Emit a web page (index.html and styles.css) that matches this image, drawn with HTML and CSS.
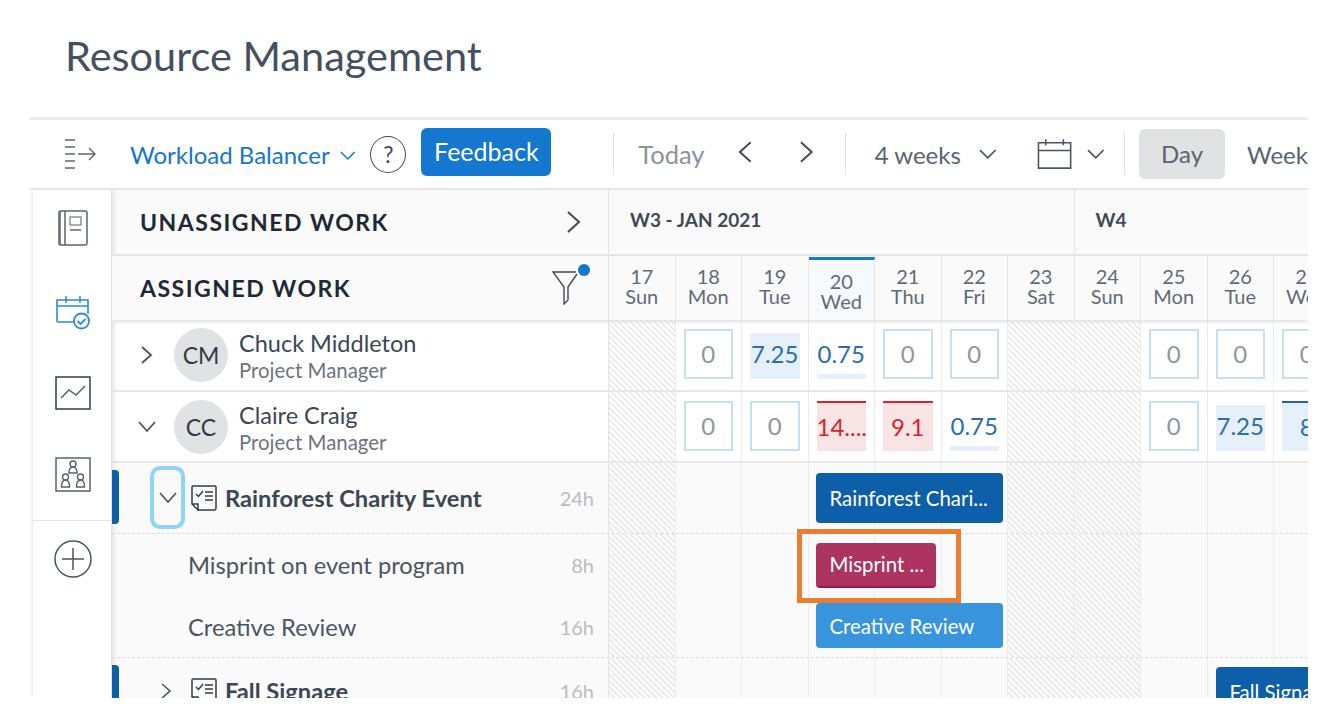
FILE: index.html
```html
<!DOCTYPE html>
<html>
 <head>
  <meta charset="UTF-8">
  <title>Resource Management</title>
  <link rel="stylesheet" href="styles.css">
 </head>
 <body>
  <div class="page">
   <h1 class="title">Resource Management</h1>

   <div class="toolbar">
    <svg class="ico-expand" width="34" height="34" viewBox="0 0 34 34"><path d="M2 3h10M2 10h10M2 17h10M2 24h10M2 31h10" stroke="#5b6572" stroke-width="1.5" fill="none"/><path d="M15 17h17M26 11l6 6-6 6" stroke="#5b6572" stroke-width="1.4" fill="none"/></svg>
    <a class="balancer">Workload Balancer</a>
    <svg class="chev-blue" width="16" height="10" viewBox="0 0 16 10"><path d="M1 1l7 7 7-7" stroke="#1477d0" stroke-width="1.5" fill="none"/></svg>
    <div class="help">?</div>
    <div class="feedback">Feedback</div>
    <div class="sep sep-a"></div>
    <span class="today">Today</span>
    <svg class="nav-prev" width="16" height="24" viewBox="0 0 16 24"><path d="M14 2L3 12l11 10" stroke="#3f4a57" stroke-width="2" fill="none"/></svg>
    <svg class="nav-next" width="16" height="24" viewBox="0 0 16 24"><path d="M2 2l11 10L2 22" stroke="#3f4a57" stroke-width="2" fill="none"/></svg>
    <div class="sep sep-b"></div>
    <span class="range">4 weeks</span>
    <svg class="chev-range" width="18" height="11" viewBox="0 0 18 11"><path d="M1 1l8 8 8-8" stroke="#4a5561" stroke-width="1.7" fill="none"/></svg>
    <svg class="ico-cal" width="36" height="32" viewBox="0 0 36 32"><path d="M1.5 4.500h33v26h-33zM1.500 12.500h33" stroke="#4a5561" stroke-width="1.600" fill="none"/><path d="M9 1v6M27 1v6" stroke="#4a5561" stroke-width="1.500"/></svg>
    <svg class="chev-cal" width="18" height="11" viewBox="0 0 18 11"><path d="M1 1l8 8 8-8" stroke="#4a5561" stroke-width="1.700" fill="none"/></svg>
    <div class="sep sep-c"></div>
    <div class="day-btn">Day</div>
    <span class="week-btn">Week</span>
   </div>

   <div class="main">
    <div class="rail">
     <div class="rail-top">
      <svg class="r-book" width="30" height="36" viewBox="0 0 30 36"><rect x="1" y="1" width="28" height="34" rx="2" fill="none" stroke="#59636f" stroke-width="1.500"/><path d="M7 1v34M2 1v34" stroke="#59636f" stroke-width="1.500"/><rect x="12" y="7" width="11" height="8" fill="none" stroke="#8a929b" stroke-width="1.500"/><path d="M12 20h11" stroke="#59636f" stroke-width="1.500"/></svg>
      <svg class="r-cal" width="34" height="34" viewBox="0 0 34 34"><path d="M19 26H2a1 1 0 0 1-1-1V4h31v14M1 10h31" fill="none" stroke="#2a8ae0" stroke-width="1.600"/><path d="M10 0v7M24 0v7" stroke="#2a8ae0" stroke-width="1.500"/><circle cx="25.500" cy="25" r="7.500" fill="#fff" stroke="#2a8ae0" stroke-width="1.800"/><path d="M21.500 25l3 3 5-5" fill="none" stroke="#2a8ae0" stroke-width="1.800"/></svg>
      <svg class="r-chart" width="36" height="34" viewBox="0 0 36 34"><rect x="1" y="1" width="34" height="32" fill="none" stroke="#333c47" stroke-width="1.500"/><path d="M6 22l8-8 7 5 9-9" fill="none" stroke="#59636f" stroke-width="1.500"/></svg>
      <svg class="r-org" width="36" height="35" viewBox="0 0 36 35"><rect x="1" y="1" width="34" height="33" fill="none" stroke="#59636f" stroke-width="1.500"/><g fill="none" stroke="#59636f" stroke-width="1.400"><circle cx="18" cy="7" r="3"/><path d="M14 16c0-4 2-6 4-6s4 2 4 6z"/><circle cx="10.500" cy="20" r="3"/><path d="M6.500 30c0-5 2-7 4-7s4 2 4 7z"/><circle cx="25.500" cy="20" r="3"/><path d="M21.500 30c0-5 2-7 4-7s4 2 4 7z"/></g></svg>
     </div>
     <div class="rail-bottom">
      <svg width="38" height="38" viewBox="0 0 38 38"><circle cx="19" cy="19" r="18" fill="none" stroke="#4a5561" stroke-width="1.500"/><path d="M19 8v22M8 19h22" stroke="#4a5561" stroke-width="1.500"/></svg>
     </div>
    </div>

    <div class="board">
     <div class="row row-week">
      <div class="lead lead-head">
       <span class="head-text">UNASSIGNED WORK</span>
       <svg width="16" height="24" viewBox="0 0 16 24"><path d="M2 2l11 10L2 22" stroke="#3f4a57" stroke-width="2" fill="none"/></svg>
      </div>
      <div class="days">
       <div class="week w3">W3 - JAN 2021</div>
       <div class="week w4">W4</div>
      </div>
     </div>

     <div class="row row-dates">
      <div class="lead lead-head">
       <span class="head-text">ASSIGNED WORK</span>
       <span class="filter">
        <svg width="30" height="40" viewBox="0 0 30 40"><path d="M24 7H1l11 15v17l4-4V22L25 9" fill="none" stroke="#3f4a57" stroke-width="1.400"/></svg>
        <i class="filter-dot"></i>
       </span>
      </div>
      <div class="days">
       <div class="date">17<br>Sun</div>
       <div class="date">18<br>Mon</div>
       <div class="date">19<br>Tue</div>
       <div class="date now">20<br>Wed</div>
       <div class="date">21<br>Thu</div>
       <div class="date">22<br>Fri</div>
       <div class="date">23<br>Sat</div>
       <div class="date">24<br>Sun</div>
       <div class="date">25<br>Mon</div>
       <div class="date">26<br>Tue</div>
       <div class="date">27<br>Wed</div>
      </div>
     </div>

     <div class="row row-person row-first">
      <div class="lead">
       <svg class="tw-person" width="14" height="20" viewBox="0 0 14 20"><path d="M2 2l9 8-9 8" stroke="#4a5561" stroke-width="1.800" fill="none"/></svg>
       <div class="avatar">CM</div>
       <div class="who"><div class="name">Chuck Middleton</div><div class="role">Project Manager</div></div>
      </div>
      <div class="days">
       <div class="cell off"></div>
       <div class="cell"><div class="load empty">0</div></div>
       <div class="cell"><div class="load some">7.25</div></div>
       <div class="cell"><div class="load low">0.75</div></div>
       <div class="cell"><div class="load empty">0</div></div>
       <div class="cell"><div class="load empty">0</div></div>
       <div class="cell off"></div>
       <div class="cell off"></div>
       <div class="cell"><div class="load empty">0</div></div>
       <div class="cell"><div class="load empty">0</div></div>
       <div class="cell"><div class="load empty">0</div></div>
      </div>
     </div>

     <div class="row row-person">
      <div class="lead">
       <svg class="tw-open" width="20" height="14" viewBox="0 0 20 14"><path d="M2 2l8 9 8-9" stroke="#4a5561" stroke-width="1.800" fill="none"/></svg>
       <div class="avatar">CC</div>
       <div class="who who-second"><div class="name">Claire Craig</div><div class="role">Project Manager</div></div>
      </div>
      <div class="days">
       <div class="cell off"></div>
       <div class="cell"><div class="load empty">0</div></div>
       <div class="cell"><div class="load empty">0</div></div>
       <div class="cell"><div class="load over">14....</div></div>
       <div class="cell"><div class="load over">9.1</div></div>
       <div class="cell"><div class="load low">0.75</div></div>
       <div class="cell off"></div>
       <div class="cell off"></div>
       <div class="cell"><div class="load empty">0</div></div>
       <div class="cell"><div class="load some">7.25</div></div>
       <div class="cell"><div class="load some full">8</div></div>
      </div>
     </div>

     <div class="row row-project">
      <div class="lead lead-work">
       <i class="tab"></i>
       <div class="focus-ring"><svg width="18" height="12" viewBox="0 0 18 12"><path d="M1 1l8 9 8-9" stroke="#4a5561" stroke-width="1.600" fill="none"/></svg></div>
       <svg class="ico-task" width="26" height="26" viewBox="0 0 26 26"><path d="M7 25H23a2 2 0 0 0 2-2V2a1 1 0 0 0-1-1H2a1 1 0 0 0-1 1v17l6 6v-6H1" fill="none" stroke="#333c47" stroke-width="1.500"/><path d="M5 9l2.500 2.500L12 6" fill="none" stroke="#333c47" stroke-width="1.500"/><path d="M14 7h8M14 11h8M14 15h8" stroke="#333c47" stroke-width="1.500"/></svg>
       <span class="project-name">Rainforest Charity Event</span>
       <span class="hours">24h</span>
      </div>
      <div class="days">
       <div class="cell off"></div><div class="cell"></div><div class="cell"></div><div class="cell"></div><div class="cell"></div><div class="cell"></div><div class="cell off"></div><div class="cell off"></div><div class="cell"></div><div class="cell"></div><div class="cell"></div>
       <div class="bar bar-dark bar-wide">Rainforest Chari...</div>
      </div>
     </div>

     <div class="row row-task">
      <div class="lead lead-work lead-task">
       <span class="task-name">Misprint on event program</span>
       <span class="hours">8h</span>
      </div>
      <div class="days">
       <div class="cell off"></div><div class="cell"></div><div class="cell"></div><div class="cell"></div><div class="cell"></div><div class="cell"></div><div class="cell off"></div><div class="cell off"></div><div class="cell"></div><div class="cell"></div><div class="cell"></div>
       <div class="bar bar-red">Misprint ...</div>
       <div class="callout"></div>
      </div>
     </div>

     <div class="row row-task2">
      <div class="lead lead-work lead-task">
       <span class="task-name">Creative Review</span>
       <span class="hours">16h</span>
      </div>
      <div class="days">
       <div class="cell off"></div><div class="cell"></div><div class="cell"></div><div class="cell"></div><div class="cell"></div><div class="cell"></div><div class="cell off"></div><div class="cell off"></div><div class="cell"></div><div class="cell"></div><div class="cell"></div>
       <div class="bar bar-light bar-wide">Creative Review</div>
      </div>
     </div>

     <div class="row row-last">
      <div class="lead lead-work">
       <i class="tab"></i>
       <svg class="tw-fall" width="14" height="18" viewBox="0 0 14 18"><path d="M2 2l8 7-8 7" stroke="#4a5561" stroke-width="1.600" fill="none"/></svg>
       <svg class="ico-task" width="26" height="26" viewBox="0 0 26 26"><path d="M7 25H23a2 2 0 0 0 2-2V2a1 1 0 0 0-1-1H2a1 1 0 0 0-1 1v17l6 6v-6H1" fill="none" stroke="#333c47" stroke-width="1.500"/><path d="M5 9l2.500 2.500L12 6" fill="none" stroke="#333c47" stroke-width="1.500"/><path d="M14 7h8M14 11h8M14 15h8" stroke="#333c47" stroke-width="1.500"/></svg>
       <span class="project-name">Fall Signage</span>
       <span class="hours">16h</span>
      </div>
      <div class="days">
       <div class="cell off"></div><div class="cell"></div><div class="cell"></div><div class="cell"></div><div class="cell"></div><div class="cell"></div><div class="cell off"></div><div class="cell off"></div><div class="cell"></div><div class="cell"></div><div class="cell"></div>
       <div class="bar bar-dark bar-fall">Fall Signage</div>
      </div>
     </div>
    </div>
   </div>
  </div>
 </body>
</html>
```

FILE: styles.css
```css
*{ margin:0; padding:0; box-sizing:border-box;}

body{
 background:#fff;
 font-family:Lato,"Open Sans",sans-serif;
 color:#3f4a57;
}

.page{
 width:1278px;
 height:698px;
 margin-left:30px;
 overflow:hidden;
}

.title{
 height:117px;
 padding:27px 0 0 35px;
 font-size:41.500px;
 line-height:56px;
 font-weight:400;
 color:#44505f;
 white-space:nowrap;
}

/* toolbar */
.toolbar{
 height:73px;
 border-top:3px solid #ececec;
 border-bottom:2px solid #e6e6e6;
 display:flex;
 align-items:center;
 white-space:nowrap;
}
.ico-expand{ margin-left:33px; flex:none;}
.balancer{
 margin-left:33px;
 font-size:24px;
 color:#1477d0;
}
.chev-blue{ margin-left:10px; margin-top:3px;}
.help{
 width:37px;
 height:37px;
 margin-left:15px;
 border:1.500px solid #3f4a57;
 border-radius:50%;
 font-size:23px;
 line-height:34px;
 text-align:center;
}
.feedback{
 width:133px;
 height:48px;
 margin-left:15px;
 margin-top:-4px;
 background:#1477d0;
 border-radius:6px;
 color:#fff;
 font-size:25px;
 line-height:46px;
 text-align:center;
}
.sep{ width:1px; height:42px; flex:none; background:#e2e2e2;}
.sep-a{ margin-left:62px;}
.today{ margin-left:24px; font-size:25.500px; color:#8b939b;}
.nav-prev{ margin-left:33px; margin-top:-4px;}
.nav-next{ margin-left:46px; margin-top:-4px;}
.sep-b{ margin-left:30px;}
.range{ margin-left:29px; font-size:24px; color:#5a6470;}
.chev-range{ margin-left:18px;}
.ico-cal{ margin-left:41px;}
.chev-cal{ margin-left:14px;}
.sep-c{ margin-left:20px;}
.day-btn{
 width:88px;
 height:50px;
 margin-left:14px;
 background:#e0e2e4;
 border-radius:6px;
 font-size:24px;
 line-height:50px;
 text-align:center;
 color:#5a6470;
}
.week-btn{ margin-left:22px; font-size:24px; color:#5a6470;}

/* layout under toolbar */
.main{ display:flex; height:508px;}

.rail{
 width:79px;
 flex:none;
 background:#fff;
 margin-left:3px;
 border-right:1px solid #e2e2e2;
 box-shadow:-3px 0 4px -2px #e6e6e6,2px 0 4px #e4e4e4;
 position:relative;
}
.rail-top{
 height:331px;
 padding-left:2px;
 border-bottom:1px solid #e2e2e2;
 display:flex;
 flex-direction:column;
 align-items:center;
}
.r-book{ margin-top:20px;}
.r-cal{ margin-top:50px;}
.r-chart{ margin-top:46px;}
.r-org{ margin-top:47px;}
.rail-bottom{ padding:19px 0 0 1px; text-align:center;}

.board{ flex:1; min-width:0; overflow:hidden;}

.row{ display:flex;}
.row-week{ height:66px; background:#fafafa; border-bottom:2px solid #e6e6e6;}
.row-dates{ height:64px; background:#fafafa; box-shadow:0 2px 4px #e0e0e0; position:relative; z-index:1;}
.row-person{ height:71px; border-bottom:2px solid #e8e8e8;}
.row-first{ height:72px;}
.row-project{ height:71px; background:#fafafa; border-bottom:1px dashed #ddd;}
.row-task{ height:62px; background:#fafafa;}
.row-task2{ height:62px; background:#fafafa; border-bottom:1px dashed #ddd;}
.row-last{ height:70px; background:#fafafa;}
.row-last .lead{ padding-bottom:4px;}

.lead{
 width:497px;
 flex:none;
 display:flex;
 align-items:center;
 position:relative;
 border-right:1px solid #e4e4e4;
}

.lead-head{ padding:0 26px 0 28px; justify-content:space-between;}
.head-text{
 font-size:23px;
 font-weight:700;
 letter-spacing:1.500px;
 color:#1f2933;
}
.filter{ position:relative; display:block; height:40px; margin-top:-7px;}
.filter-dot{
 position:absolute;
 top:-1px;
 left:26px;
 width:12px;
 height:12px;
 border-radius:50%;
 background:#1477d0;
}

.days{
 flex:none;
 display:grid;
 grid-template-columns:repeat(11,66.5px);
 grid-template-rows:100%;
 width:732px;
 position:relative;
}

.week{
 grid-row:1;
 grid-column:span 7;
 padding:18px 0 0 21px;
 font-size:19px;
 line-height:24px;
 font-weight:700;
 color:#3f4a57;
 border-right:1px solid #e6e6e6;
}
.w4{ border-right:0;}

.date{
 border-right:1px solid #e6e6e6;
 padding-top:10px;
 font-size:20px;
 line-height:20px;
 text-align:center;
 color:#5f6b78;
}
.date.now{
 padding-top:11px;
 background:#f6fafd;
 border-top:3px solid #1477d0;
 margin-top:1px;
}

.cell{
 grid-row:1;
 border-right:1px solid #ececec;
 padding:8px;
 display:flex;
}
/* bars are placed first by the grid, so the day cells need fixed columns */
.cell:nth-child(1){ grid-column:1;}
.cell:nth-child(2){ grid-column:2;}
.cell:nth-child(3){ grid-column:3;}
.cell:nth-child(4){ grid-column:4;}
.cell:nth-child(5){ grid-column:5;}
.cell:nth-child(6){ grid-column:6;}
.cell:nth-child(7){ grid-column:7;}
.cell:nth-child(8){ grid-column:8;}
.cell:nth-child(9){ grid-column:9;}
.cell:nth-child(10){ grid-column:10;}
.cell:nth-child(11){ grid-column:11;}
.row-person .cell{ padding:9px 8px 10px;}
.row-first .cell{ padding-bottom:11px;}
.off{
 background:repeating-linear-gradient(45deg,transparent 0,transparent 3.343px,#e8e8e8 3.343px,#e8e8e8 4.243px);
}

.load{
 flex:1;
 min-width:0;
 font-size:24px;
 line-height:50px;
 text-align:center;
 color:#2b6ea8;
 white-space:nowrap;
}
.empty{ border:2px solid #c6e0f5; color:#8f969d; line-height:46px; background:#fff;}
.some{ background:#e6f0fa; margin-top:4px; line-height:42px;}
.some.full{ margin-top:0; border-top:2px solid #1f63b3; line-height:48px; margin-right:-30px; padding-right:30px;}
.low{ border-bottom:5px solid #e6f0fa; line-height:49px;}
.over{
 background:#f8e4e4;
 border-top:2px solid #e0202c;
 color:#dc1f2b;
 line-height:48px;
}

.avatar{
 width:54px;
 height:54px;
 flex:none;
 margin-left:20px;
 border-radius:50%;
 background:#e1e2e4;
 font-size:23px;
 line-height:54px;
 text-align:center;
 color:#2f3a46;
}
.tw-person{ margin-left:28px;}
.tw-open{ margin-left:25px; margin-right:-3px;}
.who{ margin-left:11px;}
.who-second{ padding-top:2px;}
.name{ font-size:23.500px; line-height:30px; color:#3b4754;}
.role{ font-size:20.400px; line-height:25px; color:#6b7580;}

.lead-work{ padding-right:14px;}
.tab{
 position:absolute;
 left:0;
 top:7px;
 width:7px;
 height:54px;
 background:#0d5fa9;
 border-radius:0 4px 4px 0;
}
.focus-ring{
 width:35px;
 height:63px;
 margin-left:38px;
 margin-top:-1px;
 border:4px solid #8fd4f9;
 border-radius:10px;
 display:flex;
 align-items:center;
 justify-content:center;
}
.ico-task{ margin-left:6px; flex:none;}
.project-name{ margin-left:8px; font-size:23.700px; font-weight:700; color:#3b4754;}
.task-name{ margin-left:76px; font-size:23.700px; color:#4a5561;}
.hours{ margin-left:auto; font-size:20px; color:#b9bdc2;}
.tw-fall{ margin-left:48px; margin-right:11px;}

.bar{
 grid-row:1;
 align-self:start;
 z-index:1;
 border-radius:4px;
 color:#fff;
 font-size:20.400px;
 padding-left:14px;
 white-space:nowrap;
 overflow:hidden;
}
.bar-wide{ grid-column:4 / span 3; margin:0 5px 0 7px;}
.bar-dark{ background:#0d5fa9; height:50px; line-height:50px; margin-top:10px;}
.bar-light{ background:#3894dc; height:45px; line-height:46px; margin-top:7px;}
.bar-red{
 grid-column:4 / span 2;
 margin:9px 6px 0 7px;
 height:45px;
 line-height:43px;
 background:#ad3461;
 border-bottom:2px solid #9a1750;
}
.bar-fall{ grid-column:10 / span 3; margin-left:8px; margin-top:9px;}

.callout{
 position:absolute;
 left:188px;
 top:-5px;
 width:164px;
 height:74px;
 border:5px solid #ed7d31;
 z-index:2;
}
```
